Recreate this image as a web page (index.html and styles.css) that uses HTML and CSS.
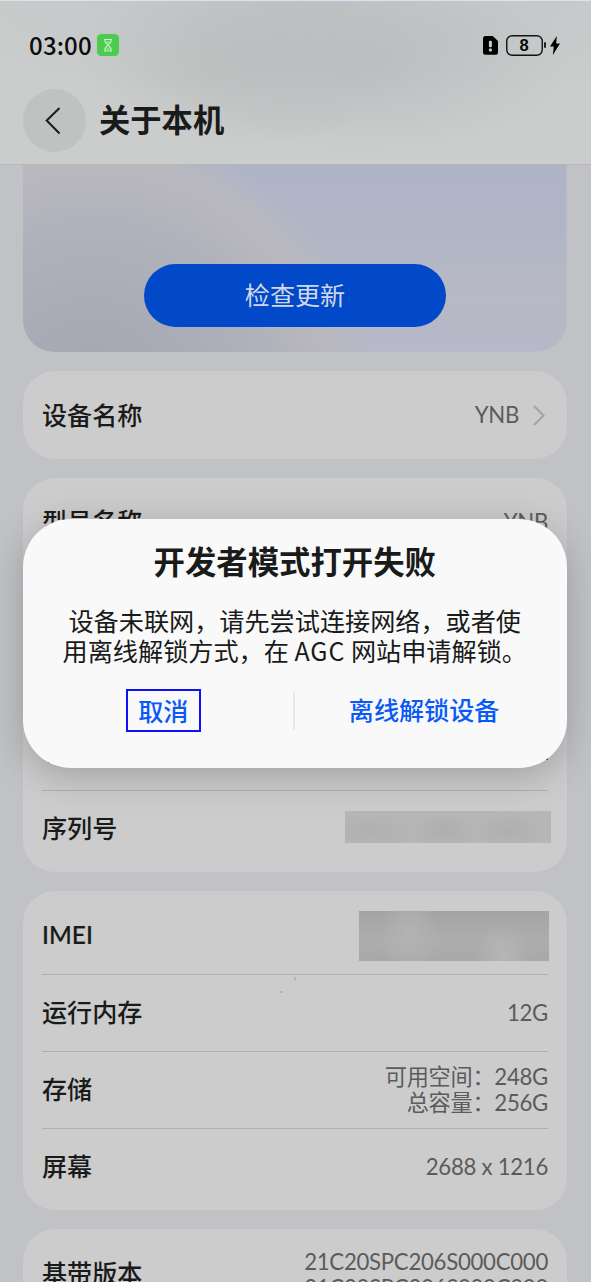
FILE: index.html
```html
<!DOCTYPE html>
<html lang="zh-CN">
<head>
<meta charset="utf-8">
<title>关于本机</title>
<link rel="stylesheet" href="styles.css">
</head>
<body>
<div class="screen">
  <header class="header">
    <div class="status">
      <span class="time">03:00</span>
      <svg class="hourglass" viewBox="0 0 22 22"><rect width="22" height="22" rx="4.5" fill="#4ccb4e"/><g fill="none" stroke="#c9f0ca" stroke-width="1.2"><path d="M7 5.5h8M7 17h8M8 5.5v2.3l3 3.2 3-3.2V5.5M8 17v-2.6l3-3.4 3 3.4V17"/><path d="M9.6 8h2.8M9.5 15h3"/></g></svg>
      <div class="status-right">
        <svg class="sim" viewBox="0 0 15 19"><path d="M2.5 0h7.2L15 5v11.5a2.2 2.2 0 0 1-2.2 2.2H2.2A2.2 2.2 0 0 1 0 16.500V2.500A2.500 2.500 0 0 1 2.500 0z"/><rect x="5.900" y="4.700" width="3" height="6.500" rx="1" fill="#c8cbcb"/><rect x="5.900" y="12.500" width="3" height="3" rx="1" fill="#c8cbcb"/></svg>
        <span class="battery"><svg viewBox="0 0 37 21"><rect x=".75" y=".75" width="35.500" height="19.500" rx="5.500" fill="none" stroke="#111" stroke-width="1.400"/></svg><b>8</b></span>
        <span class="battery-tip"></span>
        <svg class="bolt" viewBox="0 0 10 19"><path d="M6.800 0L0 10.500h3.800L2.800 19 10 7.600H6.200z"/></svg>
      </div>
    </div>
    <div class="titlebar">
      <div class="back"><svg viewBox="0 0 63 63"><path d="M36.500 19L23.700 31.500l12.800 13" fill="none" stroke="#1a1b1c" stroke-width="2"/></svg></div>
      <h1 class="title">关于本机</h1>
    </div>
  </header>
  <main class="content">
    <section class="hero">
      <svg class="hero-art" viewBox="0 0 544 188" preserveAspectRatio="none">
        <defs>
          <linearGradient id="sky" x1="0" y1="0" x2="0" y2="1"><stop offset="0" stop-color="#aeb3c8"/><stop offset=".4" stop-color="#b1b6c6"/><stop offset=".6" stop-color="#b6b9c5"/><stop offset="1" stop-color="#b8b8c8"/></linearGradient>
          <radialGradient id="orb" gradientUnits="userSpaceOnUse" cx="70" cy="240" r="280"><stop offset="0" stop-color="#a5a5b2"/><stop offset=".3" stop-color="#a8aab5"/><stop offset=".62" stop-color="#afb1bb"/><stop offset=".82" stop-color="#b8b7bd"/><stop offset=".9" stop-color="#b8b8c0"/><stop offset="1" stop-color="#b4b7c4" stop-opacity="0"/></radialGradient>
        </defs>
        <rect width="544" height="188" fill="url(#sky)"/>
        <circle cx="70" cy="240" r="280" fill="url(#orb)"/>
      </svg>
      <div class="update">检查更新</div>
    </section>
    <section class="card">
      <div class="row"><span class="label">设备名称</span><span class="value">YNB</span><svg class="chevron" viewBox="0 0 12 21"><path d="M1 1l9.500 9.500L1 20" fill="none" stroke="#a3a3a3" stroke-width="2"/></svg></div>
    </section>
    <section class="card">
      <div class="row"><span class="label">型号名称</span><span class="value">YNB</span></div>
      <div class="row"></div>
      <div class="row"></div>
      <div class="row"></div>
      <div class="row"><span class="label">序列号</span><span class="mosaic serial"></span></div>
    </section>
    <section class="card">
      <div class="row"><span class="label latin">IMEI</span><span class="mosaic imei"></span></div>
      <div class="row"><span class="label">运行内存</span><span class="value">12G</span></div>
      <div class="row"><span class="label">存储</span><span class="value double">可用空间：248G<br>总容量：256G</span></div>
      <div class="row"><span class="label">屏幕</span><span class="value">2688 x 1216</span></div>
    </section>
    <section class="card">
      <div class="row"><span class="label">基带版本</span><span class="value build">21C20SPC206S000C000<br>21C20SPC206S000C000</span></div>
    </section>
  </main>
  <i class="speck s1"></i><i class="speck s2"></i><i class="speck s3"></i><i class="speck s4"></i><i class="speck s5"></i>
  <div class="dialog">
    <h2 class="dialog-title">开发者模式打开失败</h2>
    <p class="message">设备未联网，请先尝试连接网络，或者使<br>用离线解锁方式，在 <span class="agc">AGC</span> 网站申请解锁。</p>
    <div class="actions">
      <div class="action"><span class="cancel">取消</span></div>
      <span class="divider"></span>
      <div class="action">离线解锁设备</div>
    </div>
  </div>
</div>
</body>
</html>
```
FILE: styles.css
```css
* { box-sizing: border-box; }
body { margin: 0; }
.screen {
  position: relative;
  width: 591px;
  height: 1282px;
  overflow: hidden;
  background: #c0c2c5;
  color: #191a1a;
  font-family: "Noto Sans CJK SC", sans-serif;
}
.header {
  height: 165px;
  padding: 33px 0 0 23px;
  border-top: 1px solid #d3e4f2;
  border-bottom: 1px solid #b6b6b7;
  background:
    radial-gradient(ellipse 210px 90px at 360px 60px, #bbbdbf 0%, #bbbdbf00 100%),
    radial-gradient(ellipse 170px 90px at 250px 55px, #bcbebe 0%, #bcbebe00 100%),
    radial-gradient(ellipse 420px 100px at 330px 0, #c0c6c7 0%, #c0c6c700 100%),
    #cbcccc;
}
.status { display: flex; align-items: center; height: 22px; padding-left: 6px; }
.time { width: 62px; font: 500 24px/22px "Noto Sans CJK SC", sans-serif; letter-spacing: .2px; color: #0c0c0c; white-space: nowrap; }
.hourglass { width: 22px; height: 22px; margin-left: 6px; }
.status-right { display: flex; align-items: center; margin-left: auto; margin-right: 31px; }
.sim { width: 15px; height: 19px; margin-right: 8px; }
.battery { display: grid; width: 37px; height: 21px; }
.battery svg { grid-area: 1 / 1; width: 37px; height: 21px; }
.battery b { grid-area: 1 / 1; font: 700 16.500px/21px "Liberation Sans", sans-serif; text-align: center; color: #080808; padding-right: 1px; }
.battery-tip { width: 2px; height: 6px; margin: 0 4px 0 1px; border-radius: 1px; background: #222; }
.bolt { width: 10px; height: 19px; }
.titlebar { display: flex; align-items: center; gap: 13px; margin-top: 33px; }
.back { width: 63px; height: 63px; border-radius: 50%; background: #c0c1c1; }
.back svg { display: block; width: 63px; height: 63px; }
.title { margin: 0 0 3px; font-size: 31.300px; line-height: 46px; font-weight: 700; }
.content { display: flex; flex-direction: column; gap: 19px; padding: 0 24.500px 0 23px; }
.hero { display: grid; height: 187px; overflow: hidden; border-radius: 0 0 32px 32px; }
.hero-art { grid-area: 1 / 1; width: 100%; height: 187px; }
.update {
  grid-area: 1 / 1; z-index: 1; width: 302px; height: 63px; margin: 99px 0 0 121px; border-radius: 32px;
  background: #0249c9; color: #d0d8ea; font-size: 25.100px; line-height: 60px; text-align: center;
}
.card { flex: none; padding: 5.500px 18.500px 5.500px 19px; border-radius: 32px; background: #ccc; }
.row { display: flex; align-items: center; height: 76.600px; }
.card .row:only-child { height: 77px; }
.row + .row { border-top: 1px solid #afafaf; }
.card:nth-child(4) .row { height: 77px; }
.card:nth-child(4) .row:first-child { height: 77.500px; }
.label { margin: 0 auto 3px 0; font-size: 25.100px; line-height: 36px; font-weight: 500; }
.latin { margin-bottom: 0; font-family: Lato, "Noto Sans CJK SC", sans-serif; font-size: 24.500px; -webkit-text-stroke: .2px #191a1a; }
.value { font: 400 22.200px/26px Lato, "Noto Sans CJK SC", sans-serif; letter-spacing: -.28px; color: #5b5b5b; text-align: right; white-space: nowrap; }
.build { margin-top: 3px; }
.double { margin-top: 1px; }
.chevron { width: 12px; height: 21px; margin: 0 3px 0 14px; }
.mosaic { flex: none; }
.serial { width: 206px; height: 32px; margin: 0 -3px 4px 0; background: radial-gradient(ellipse 35px 18px at 98px 19px, #aeaeae, #aeaeae00), radial-gradient(ellipse 35px 18px at 164px 19px, #afafaf, #afafaf00), radial-gradient(ellipse 45px 20px at 25px 20px, #b0b0b0, #b0b0b000), #b6b6b6; }
.imei { width: 190px; height: 50px; margin: 1px -1px 0 0; background: radial-gradient(ellipse 30px 45px at 50px 24px, #b3b3b3, #b3b3b300), radial-gradient(ellipse 28px 34px at 144px 44px, #b6b6b6, #b6b6b600), linear-gradient(#a4a4a4, #adadad 60%, #a8a8a8); }
.speck { position: absolute; width: 3px; height: 2px; background: #b3b3b3; }
.s1 { left: 294px; top: 977px; width: 2px; height: 3px; }
.s2 { left: 280px; top: 991px; }
.s3 { left: 44px; top: 758px; width: 2px; background: #888; }
.s4 { left: 48px; top: 761px; width: 2px; background: #555; }
.s5 { left: 545px; top: 758px; background: #444; }
.dialog {
  position: absolute; left: 23px; top: 519px; width: 543.500px; height: 249px; padding-top: 19px;
  border-radius: 48px; background: #f9f9f9; box-shadow: 0 8px 36px rgba(0, 0, 0, .21); text-align: center;
}
.dialog-title { margin: 0; font-size: 31.400px; line-height: 46px; font-weight: 700; }
.message { margin: 21px 0 0; font-size: 25.150px; line-height: 30px; white-space: nowrap; }
.agc { font-size: 25px; letter-spacing: .9px; }
.actions { display: flex; align-items: center; height: 44px; margin-top: 24px; color: #0a59f7; font-size: 25.100px; line-height: 39px; font-weight: 500; }
.action { flex: 1; display: flex; justify-content: center; padding: 0 0 2px 11px; }
.action:last-child { padding: 0 13px 3px 0; }
.cancel { width: 75px; height: 43px; border: 2px solid #1010f8; }
.divider { width: 2px; height: 38px; background: #e9e9e9; }
```
